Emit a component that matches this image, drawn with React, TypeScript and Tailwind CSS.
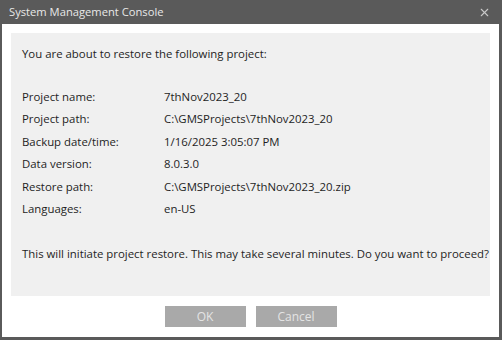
import { X } from "lucide-react";

const rows = [
  { label: "Project name:", value: "7thNov2023_20" },
  { label: "Project path:", value: "C:\\GMSProjects\\7thNov2023_20" },
  { label: "Backup date/time:", value: "1/16/2025 3:05:07 PM" },
  { label: "Data version:", value: "8.0.3.0" },
  { label: "Restore path:", value: "C:\\GMSProjects\\7thNov2023_20.zip" },
  { label: "Languages:", value: "en-US" },
];

export default function App() {
  return (
    <div
      className="w-[502px] h-[340px] bg-[#5a5a5a] p-[2px] pt-0 pr-[3px] pb-[3px] flex flex-col text-[11.4px]"
      style={{ fontFamily: "'Open Sans', 'Noto Sans', sans-serif" }}
    >
      {/* Title bar */}
      <div className="h-[24px] flex items-center justify-between pl-[7px] pr-[8px] text-[#e8e8e8]">
        <span className="text-[11.2px]">System Management Console</span>
        <X className="w-[13px] h-[13px] text-[#c8c8c8]" strokeWidth={2} />
      </div>

      {/* Body */}
      <div className="flex-1 bg-white flex flex-col px-[9px] pt-[9px]">
        <div className="bg-[#f0f0f0] h-[263px] px-[11px] pt-[9px] text-[#1e1e1e] flex flex-col whitespace-nowrap">
          <div className="h-[23px] flex items-center">You are about to restore the following project:</div>
          <div className="mt-[20px] flex flex-col">
            {rows.map((r) => (
              <div key={r.label} className="h-[22.5px] flex items-center">
                <span className="w-[142px]">{r.label}</span>
                <span>{r.value}</span>
              </div>
            ))}
          </div>
          <div className="mt-[22px] h-[23px] flex items-center">
            This will initiate project restore. This may take several minutes. Do you want to proceed?
          </div>
        </div>

        <div className="flex justify-center gap-[10px] mt-[10px]">
          <button className="w-[81px] h-[21px] bg-[#a9a9a9] text-[#e4e4e4] text-[12px]">OK</button>
          <button className="w-[81px] h-[21px] bg-[#a9a9a9] text-[#e4e4e4] text-[12px]">Cancel</button>
        </div>
      </div>
    </div>
  );
}
